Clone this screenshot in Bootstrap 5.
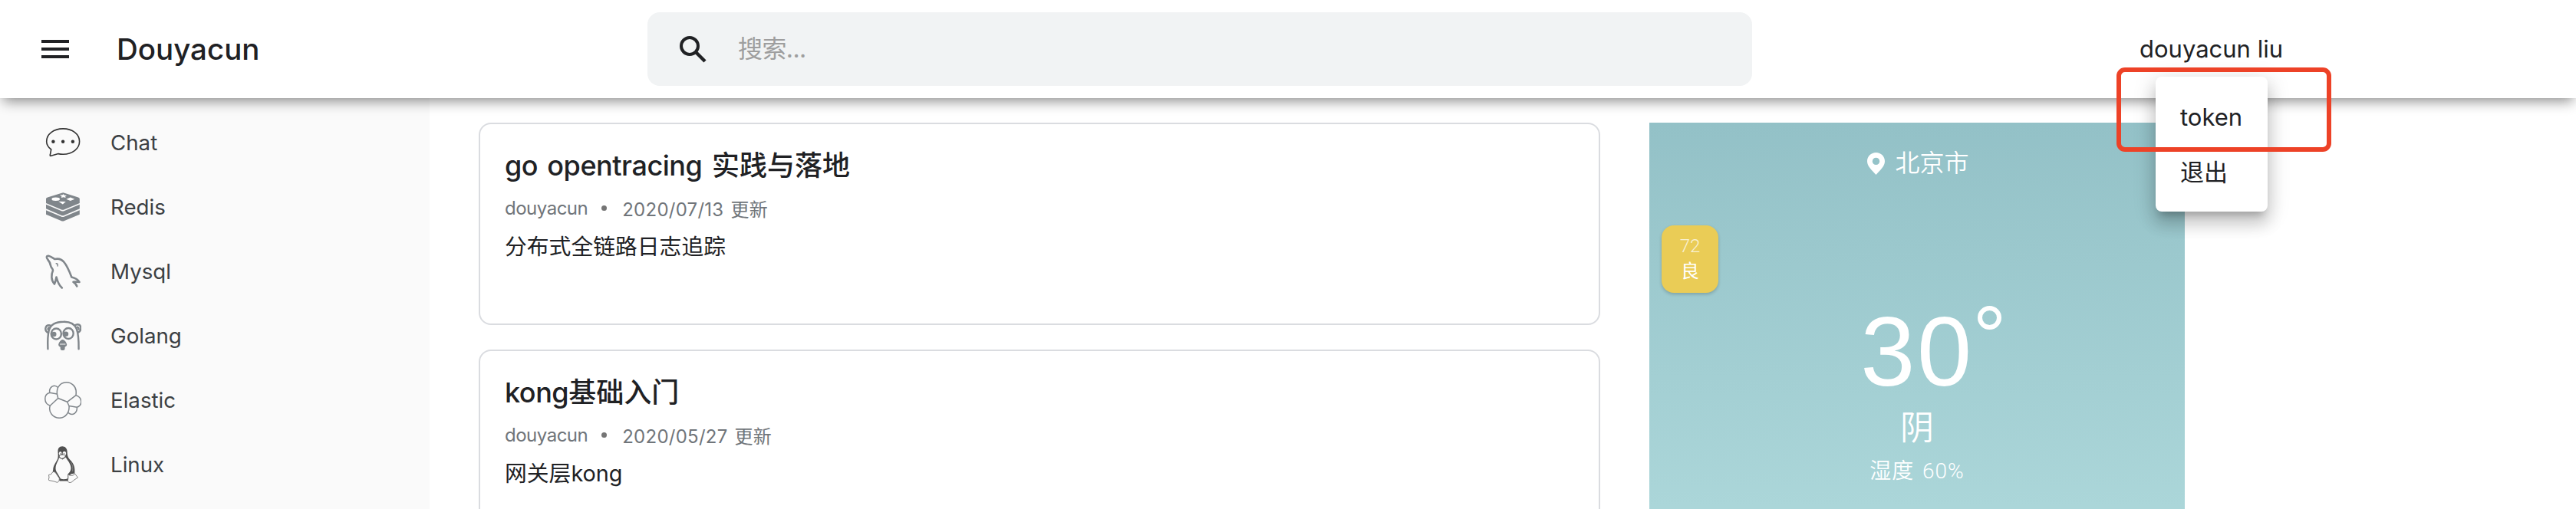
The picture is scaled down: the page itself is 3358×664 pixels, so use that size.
<!DOCTYPE html>
<html lang="zh-CN">
<head>
<meta charset="utf-8">
<title>Douyacun</title>
<link rel="stylesheet" href="https://cdn.jsdelivr.net/npm/bootstrap@5.3.0/dist/css/bootstrap.min.css">
<style>
body{font-family:Inter,"Noto Sans CJK SC",sans-serif;color:#202124;background:#fff;height:664px;overflow:hidden}
.topbar{height:128px;display:grid;grid-template-columns:844px 1440px 1fr;background:#fff;box-shadow:0 8px 16px -4px rgba(0,0,0,.45);position:relative;z-index:5}
.brand{font-size:38.5px;font-weight:500;line-height:56px;margin-left:61px;padding:0 0 0 1px}
.burger{margin-left:54px}
.search{height:96px;border-radius:16px;background:#f1f3f4;padding-left:42px}
.search span{font-size:32px;line-height:48px;color:#9e9e9e;margin-left:41px;letter-spacing:-.6px}
.user{margin-left:505px;font-size:31px;line-height:48px;padding-top:1px;margin-top:-1px}
.usermenu{top:61px;left:21px;width:146px;height:176px;border-radius:8px;padding:29px 0 0 32px;box-shadow:0 10px 10px -6px rgba(0,0,0,.2),0 16px 20px 2px rgba(0,0,0,.14),0 6px 28px 4px rgba(0,0,0,.12)}
.usermenu div+div{margin-top:24px}
.frame{top:49px;left:-30px;width:280px;height:110px;border:6px solid #ed4227;border-radius:11px}
.page{display:grid;grid-template-columns:560px 1462px 698px;height:536px;overflow:hidden}
.side{background:#fafafa;padding-top:16px}
.side a{height:84px;padding-left:58px;font-size:27.7px;color:#3c4043}
.side a span{padding-top:2px}
.side svg{width:48px;height:48px;margin-right:38px;flex:none}
.feed{margin-left:64px;padding-top:32px;gap:32px;width:1462px;height:536px;overflow:hidden}
.post{height:264px;flex:none;border:2px solid #dadce0;border-radius:16px;padding:30px 32px}
.post h2{font-size:36px;font-weight:500;line-height:48px;margin:0 0 16px;word-spacing:3px}
.post h2 span{letter-spacing:-.45px}
.meta{font-size:24px;line-height:32px;color:#70757a}
.meta i{width:7px;height:7px;border-radius:50%;background:#757575;margin:12px 20px 0 18px}
.author{letter-spacing:-.5px}
.date{padding-top:2px;word-spacing:2px;letter-spacing:.25px}
.post p{font-size:28.8px;line-height:40px;margin:12px 0 0}
.weather{margin:32px -128px 0 128px;background:linear-gradient(#93c1c7,#abd6d9 500px);color:#fff;font-family:"Liberation Sans","Noto Sans CJK SC",sans-serif;font-weight:350}
.city{font-size:32px;line-height:48px;padding:29px 0 0 3px}
.city svg{margin-right:13px}
.aqi{width:74px;height:88px;margin:57px 0 0 16px;border-radius:16px;background:#eacc56;box-shadow:0 2px 4px rgba(0,0,0,.2);font-size:24px;line-height:33px;padding-top:11px}
.aqi,.hum{font-family:Roboto,"Noto Sans CJK SC",sans-serif}
.aqi div+div{font-weight:400}
.temp{font-size:128px;line-height:128px;letter-spacing:2.6px;margin-top:13px}
.deg{width:31px;height:31px;border:6px solid #fff;border-radius:50%;top:4px;left:153px}
.sky{font-size:44px;line-height:56px;margin-top:8px}
.hum{font-size:28px;line-height:40px;letter-spacing:1px;word-spacing:3px;margin-top:8px}
</style>
</head>
<body>
<header class="topbar align-items-center">
  <div class="d-flex align-items-center">
    <svg class="burger" width="36" height="24"><path d="M0 2h36M0 12h36M0 22h36" stroke="#202124" stroke-width="4"/></svg>
    <span class="brand">Douyacun</span>
  </div>
  <div class="search d-flex align-items-center">
    <svg width="35" height="35" viewBox="0 0 35 35" fill="none" stroke="#202124" stroke-width="4"><circle cx="13" cy="13" r="11"/><path d="M21.5 21.5 33 33" stroke-width="4.4"/></svg>
    <span>搜索...</span>
  </div>
  <div class="user position-relative">douyacun liu
    <div class="usermenu position-absolute bg-white"><div>token</div><div>退出</div></div>
    <div class="frame position-absolute"></div>
  </div>
</header>
<main class="page">
  <nav class="side d-flex flex-column">
    <a class="d-flex align-items-center text-decoration-none">
      <svg viewBox="0 0 48 48" fill="none" stroke="#333" stroke-width="1.6" stroke-linejoin="round"><path d="M8.700 33C4.700 30 2.700 26.500 2.700 22.500 2.700 13 12 5.900 24.200 5.900S45.600 13 45.600 22.500 36.500 39.300 24.200 39.300c-2.200 0-4.200-.2-6.200-.7L8.500 41.300C7.200 41.500 7 41 7.400 39.800Z"/><g fill="#333" stroke="none"><circle cx="11.400" cy="22.700" r="2.200"/><circle cx="24.100" cy="22.700" r="2.200"/><circle cx="36.900" cy="22.700" r="2.200"/></g></svg><span>Chat</span></a>
    <a class="d-flex align-items-center text-decoration-none">
      <svg viewBox="0 0 48 48" fill="#80868b"><path d="M2 13.200Q2 12.400 4 11.500L22.500 5.700Q24.300 5 26 5.700L44 11.500Q45.800 12.300 45.800 13.200V19L26 27.300Q23.800 28.300 21.600 27.300L2 19Z"/><path d="M2 20.700 21.600 29Q23.800 30 26 29L45.800 20.700V26.300L26 34.700Q23.800 35.700 21.600 34.700L2 26.300Z"/><path d="M2 28.300 21.600 36.500Q23.800 37.500 26 36.500L45.800 28.300V33.800L26 41.900Q23.800 42.900 21.600 41.900L2 33.800Z"/><g fill="#fff"><ellipse cx="14.700" cy="13.700" rx="5.300" ry="2.200"/><path d="M28.300 13.700 33.800 11.500 39.300 13.700 33.800 16ZM18.300 16.700 27.800 17 23.800 20.500ZM20 8.300l3 .2 1.800-1.300 1.200 1.600 3 .2-2 1.400.7 1.600-2.900-.7-2.800.8.300-1.800Z"/></g></svg><span>Redis</span></a>
    <a class="d-flex align-items-center text-decoration-none">
      <svg viewBox="0 0 48 48" fill="none" stroke="#80868b" stroke-width="2.600" stroke-linecap="round" stroke-linejoin="round"><path d="M42.300 43.500C41.500 41 39.500 39 37.500 37.800 40.500 37 43 37.500 45.500 38 43.500 34.500 39.500 32.500 35.300 31.500 32.500 24 30 17.500 25.500 12 22.500 8.300 19 6.800 13.500 8 10 6 8 4.200 5.200 3.700 2 3.400 2.500 6.500 4.200 8.500 6.500 11 7.500 13.500 8.200 17 8.600 19.500 11 20.500 11 23 8.500 28 8.500 36 13 40.500 14.500 37.500 15 34.500 15.500 31.500 16.800 36.500 18.500 42 22.800 45.500"/><path d="M15.200 13.800c1.800 0 2.300.8 1.900 3.200" stroke-width="1.500"/></svg><span>Mysql</span></a>
    <a class="d-flex align-items-center text-decoration-none">
      <svg viewBox="0 0 48 48" fill="none" stroke="#80868b" stroke-width="2.400" stroke-linecap="round"><path d="M4.400 41.200C4 31 3.800 24 5.800 17 8 9 15 5.700 25 5.700 34 5.500 39.500 9 41.800 15 44.500 22 44.700 31 44.600 41.200"/><path d="M5 20C-.5 18 .5 10.300 6 10.200L8.500 11M4.900 16.200Q3.900 14.500 6 13.200M44 19.600C49.200 17 48 9.200 43 9.200 41.500 9.200 40.500 9.800 39.500 10.500M44.500 15.500Q45 13 42.600 12.700"/><ellipse cx="15.300" cy="21.500" rx="6.600" ry="7"/><ellipse cx="31.100" cy="21" rx="6.600" ry="7"/><g fill="#80868b" stroke="none"><circle cx="12.200" cy="22" r="3.300"/><circle cx="27.900" cy="21.700" r="3.300"/><path d="M23.500 29C20.500 29.500 18 34 18.200 36 18.300 38 20.500 38.200 20.700 39 20.600 42 21 43 23.700 43S26.700 42 26.600 39C27 38 29.200 38 29.200 35.800 29 33.500 26.700 29.200 23.500 29Z"/></g><path d="M20.500 35h6.500" stroke="#fafafa" stroke-width="1"/></svg><span>Golang</span></a>
    <a class="d-flex align-items-center text-decoration-none">
      <svg viewBox="0 0 48 48" fill="none" stroke="#80868b" stroke-width="1.500" stroke-linejoin="round"><path d="M17.600 7.500C20 3.200 24 .8 28.500.8 35.600.8 41.200 6.200 41.200 13.200Q41.300 15.500 41 17.600L29.600 26.300 17.700 21.500 16.400 16Q16 11 17.600 7.500Z"/><path d="M17.600 7.500C13 2.500 5.500 6.500 6.800 14.300L16.400 16M6.800 14.300C-1.300 16.500-1.300 28.500 7.300 31.200L17.700 21.500M7.300 31.200C4.500 40 11.500 47.300 19.400 47.300 27 47.300 32.800 40.500 32 31.500L29.600 26.300M41 17.600C49.500 20.500 50 30.500 42.300 33.200L32 31.500M42.300 33.200C43 40 37 45.500 31 40.500"/></svg><span>Elastic</span></a>
    <a class="d-flex align-items-center text-decoration-none">
      <svg viewBox="0 0 48 48"><path fill="#505050" d="M23.200.2C19 .2 17.300 3.200 17.500 7.500 17.700 11 18 14 17 17 15 21 11.800 25 11.300 29 11.500 32 10 33.500 11.500 35.500L20 45.500H31L34 36.500 39.300 35.500C40.300 27 37.500 22 33.500 18 29.800 14 29.800 11 29.600 7 29.500 3 27 .2 23.200.2Z"/><path fill="#fafafa" d="M18.900 15C19 17.500 15.500 22 14.700 26.500 14 30 15 33 17 35.500L21 42.500C24 43.500 28 43.500 30.300 42L30.500 36.500C33 34 35.300 31 34.200 26.500 33 21 29 17.500 27.800 14.500L23.500 17.500Z"/><ellipse cx="20.700" cy="9.500" rx="1.900" ry="2.600" fill="#fafafa"/><ellipse cx="25.900" cy="9.400" rx="2.200" ry="2.700" fill="#fafafa"/><path d="M19 12.800Q23 9.600 27.600 12.600 26 16 22.600 16.300Q20 16 19 12.800Z" fill="#fafafa" stroke="#505050" stroke-width=".7"/><circle cx="21.200" cy="10" r=".8" fill="#444"/><circle cx="25.400" cy="10" r=".8" fill="#444"/><path d="M34.300 21C36.800 25 37.300 28 36.600 33" fill="none" stroke="#999" stroke-width=".7"/><path fill="#fafafa" stroke="#666" stroke-width=".8" d="M5.500 37.500Q9.500 37.500 10.500 34Q12 32 14.500 34.800L19.400 42Q20 46 16.800 47.400L12.500 46 5.700 44.500Q5 43.500 6 41ZM30.800 36.800Q32 38.500 36 38.300 39 38 39.400 35.700L43.500 41Q39 43.500 34.700 47.400 31 48.300 30.300 45.500Q31.300 41 30.800 36.800Z"/></svg><span>Linux</span></a>
  </nav>
  <section class="feed d-flex flex-column">
    <article class="post">
      <h2><span>go opentracing</span> 实践与落地</h2>
      <div class="meta d-flex"><span class="author">douyacun</span><i></i><span class="date">2020/07/13 更新</span></div>
      <p>分布式全链路日志追踪</p>
    </article>
    <article class="post">
      <h2><span>kong</span>基础入门</h2>
      <div class="meta d-flex"><span class="author">douyacun</span><i></i><span class="date">2020/05/27 更新</span></div>
      <p>网关层kong</p>
    </article>
  </section>
  <aside class="weather">
    <div class="city d-flex justify-content-center align-items-center"><svg width="23" height="29" viewBox="0 0 23 29"><path fill="#fff" fill-rule="evenodd" d="M11.500 0C5 0 0 5 0 11.300 0 18 6 23 11.500 29 17 23 23 18 23 11.300 23 5 18 0 11.500 0Zm0 6.700a4.700 4.700 0 1 1 0 9.400 4.700 4.700 0 0 1 0-9.400Z"/></svg>北京市</div>
    <div class="aqi text-center"><div class="opacity-75">72</div><div>良</div></div>
    <div class="text-center"><span class="temp d-inline-block position-relative">30<i class="deg position-absolute"></i></span></div>
    <div class="sky text-center">阴</div>
    <div class="hum text-center">湿度 60%</div>
  </aside>
</main>
<script src="https://cdn.jsdelivr.net/npm/bootstrap@5.3.0/dist/js/bootstrap.bundle.min.js"></script>
</body>
</html>
